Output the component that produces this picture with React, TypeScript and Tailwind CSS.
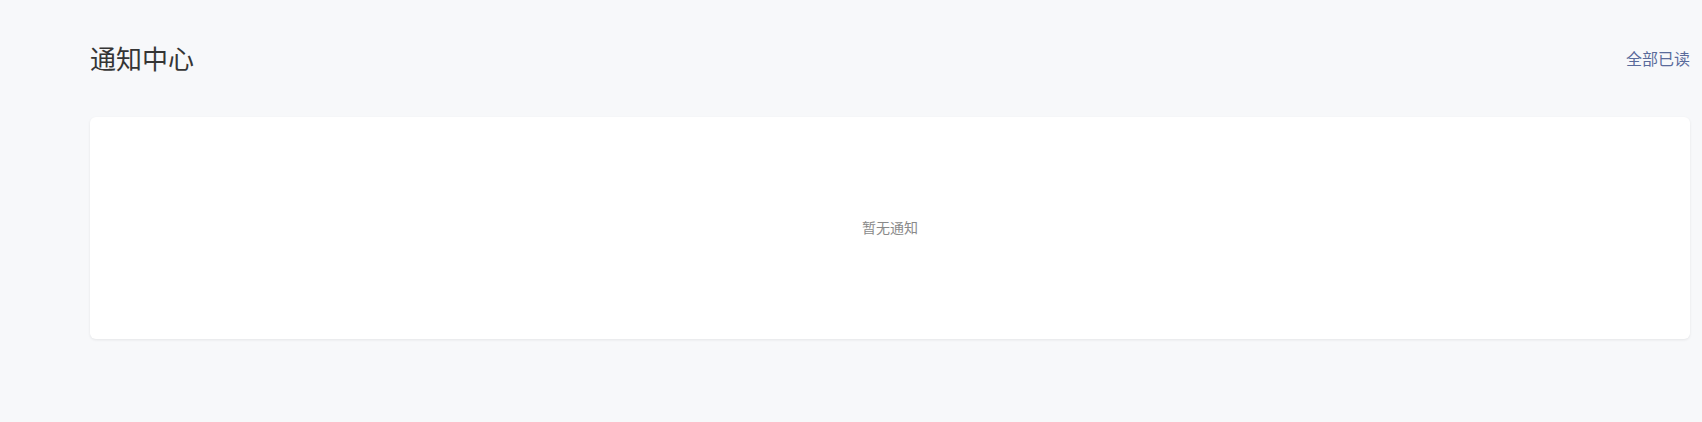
export default function App() {
  return (
    <div
      className="min-h-[422px] w-full bg-[#f7f8fa] pl-[90px] pr-3 pt-10"
      style={{ fontFamily: '"Noto Sans CJK SC", "Noto Sans", sans-serif' }}
    >
      {/* Header */}
      <div className="flex h-9 items-center justify-between">
        <h1 className="text-[26px] leading-9 font-normal text-[#353535]">通知中心</h1>
        <button className="text-[16px] leading-6 text-[#5a6b9b]">全部已读</button>
      </div>

      {/* Notification list */}
      <div className="mt-[41px] flex h-[222px] items-center justify-center rounded-md bg-white shadow-[0_1px_3px_rgba(0,0,0,0.08)]">
        <p className="-mt-0.5 text-[14px] text-[#8a8a8a]">暂无通知</p>
      </div>
    </div>
  )
}
